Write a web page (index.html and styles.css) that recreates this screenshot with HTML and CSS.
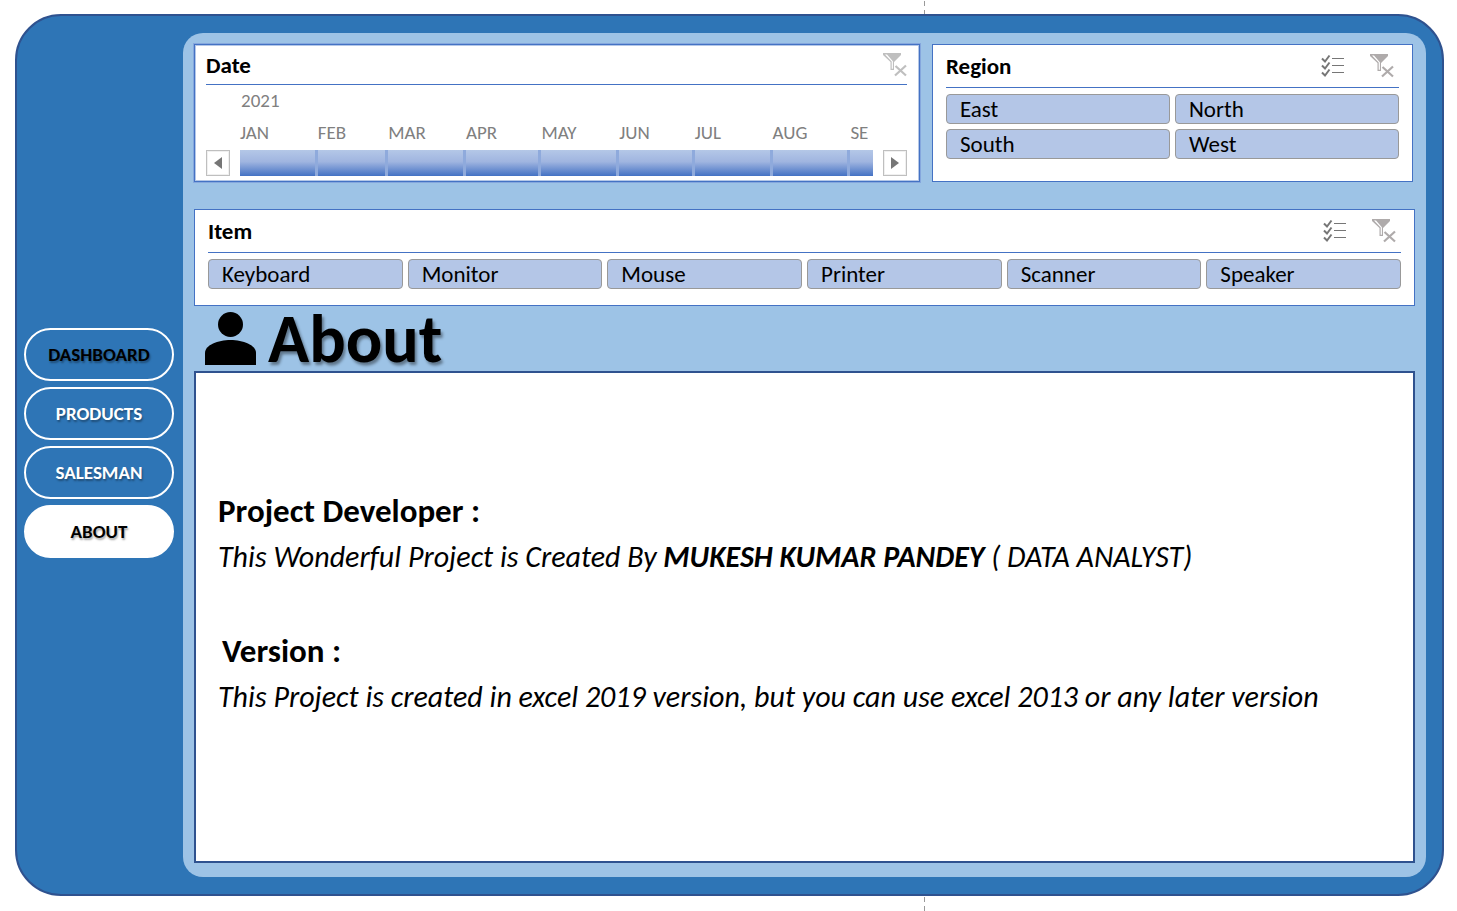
FILE: index.html
```html
<!DOCTYPE html>
<html lang="en">
<head>
<meta charset="utf-8">
<title>About</title>
<link rel="stylesheet" href="styles.css">
</head>
<body>
<svg class="defs" aria-hidden="true">
  <symbol id="clear" viewBox="0 0 24 24">
    <path d="M0 0h18v2l-7 7v8H7.500V9L0 2z" fill="currentColor"/>
    <path d="M2 1.500l6.700 7v7.300h1.200V8.200L4 1.500z" fill="#fff"/>
    <path d="M12.500 13l10.500 9.500M23 12.500L12 22.500" stroke="currentColor" stroke-width="2.200" fill="none"/>
  </symbol>
  <symbol id="multi" viewBox="0 0 24 24">
    <path d="M1 4.500l3 3L8.500 1.500M1 11.500l3 3L8.500 8.500M1 18.500l3 3L8.500 15.500" stroke="currentColor" stroke-width="2" fill="none"/>
    <path d="M11 4.500h12M11 11.500h12M11 18.500h12" stroke="currentColor" fill="none"/>
  </symbol>
</svg>
<div class="break break-top"></div>
<div class="frame">
  <nav class="nav">
    <button class="nav-btn dark">DASHBOARD</button>
    <button class="nav-btn">PRODUCTS</button>
    <button class="nav-btn">SALESMAN</button>
    <button class="nav-btn active">ABOUT</button>
  </nav>
  <main class="panel">
    <div class="filters">
      <section class="card timeline">
        <header class="card-head"><h2>Date</h2>
          <button class="icon-btn" aria-label="Clear date filter"><svg class="icon pale"><use href="#clear"/></svg></button>
        </header>
        <div class="year">2021</div>
        <div class="track">
          <button class="arrow" aria-label="Earlier"><svg viewBox="0 0 8 12"><path d="M8 0v12L0 6z"/></svg></button>
          <div class="months">
            <span>JAN</span><span>FEB</span><span>MAR</span><span>APR</span><span>MAY</span><span>JUN</span><span>JUL</span><span>AUG</span><span>SE</span>
            <button aria-label="January"></button><button aria-label="February"></button><button aria-label="March"></button><button aria-label="April"></button><button aria-label="May"></button><button aria-label="June"></button><button aria-label="July"></button><button aria-label="August"></button><button aria-label="September"></button>
          </div>
          <button class="arrow" aria-label="Later"><svg viewBox="0 0 8 12"><path d="M0 0v12l8-6z"/></svg></button>
        </div>
      </section>
      <section class="card slicer">
        <header class="card-head"><h2>Region</h2>
          <button class="icon-btn" aria-label="Multi-select regions"><svg class="icon dim"><use href="#multi"/></svg></button>
          <button class="icon-btn" aria-label="Clear region filter"><svg class="icon"><use href="#clear"/></svg></button>
        </header>
        <div class="choices two">
          <button>East</button><button>North</button><button>South</button><button>West</button>
        </div>
      </section>
    </div>
    <section class="card slicer items">
      <header class="card-head"><h2>Item</h2>
        <button class="icon-btn" aria-label="Multi-select items"><svg class="icon dim"><use href="#multi"/></svg></button>
        <button class="icon-btn" aria-label="Clear item filter"><svg class="icon"><use href="#clear"/></svg></button>
      </header>
      <div class="choices six">
        <button>Keyboard</button><button>Monitor</button><button>Mouse</button><button>Printer</button><button>Scanner</button><button>Speaker</button>
      </div>
    </section>
    <div class="title">
      <svg class="person" viewBox="0 0 51 53" aria-hidden="true"><circle cx="25.500" cy="12.500" r="12.500"/><path d="M0 53V41C0 33 13 28 25.500 28S51 33 51 41v12z"/></svg>
      <h1>About</h1>
    </div>
    <article class="about">
      <h3>Project Developer :</h3>
      <p>This Wonderful Project is Created By <strong>MUKESH KUMAR PANDEY</strong> ( DATA ANALYST)</p>
      <h3 class="version">Version :</h3>
      <p>This Project is created in excel 2019 version, but you can use excel 2013 or any later version</p>
    </article>
  </main>
</div>
<div class="break break-bottom"></div>
</body>
</html>
```
FILE: styles.css
```css
* { box-sizing: border-box; }

body {
  margin: 0;
  min-height: 100vh;
  display: flex;
  flex-direction: column;
  background: #fff;
  color: #000;
  font-family: Carlito, Lato, "Open Sans", sans-serif;
}

button {
  margin: 0;
  padding: 0;
  border: 0;
  background: none;
  color: inherit;
  font: inherit;
  cursor: pointer;
}

h1, h2, h3, p { margin: 0; }

.defs { display: none; }

.break {
  width: 1px;
  height: 14px;
  margin-left: 924px;
  background: repeating-linear-gradient(#fff 0 1px, #999 1px 6px, #fff 6px 9px);
}

.break-bottom { height: 15px; }

.frame {
  flex: 1;
  display: flex;
  margin: 0 13px 0 15px;
  border: 2px solid #2f528f;
  border-radius: 46px;
  background: #2e75b6;
}

.nav {
  width: 166px;
  padding: 0 9px 24px 7px;
  display: flex;
  flex-direction: column;
  justify-content: center;
  gap: 6px;
}

.nav-btn {
  height: 53px;
  border: 2px solid #fff;
  border-radius: 27px;
  color: #fff;
  font-size: 19px;
  font-weight: 700;
  text-shadow: 1px 2px 2px rgba(0, 0, 0, .35);
}

.nav-btn.dark { color: #000; }

.nav-btn.active { background: #fff; color: #000; }

.panel {
  flex: 1;
  min-width: 0;
  display: flex;
  flex-direction: column;
  margin: 17px 16px 17px 0;
  padding: 11px 11px 14px;
  border-radius: 20px;
  background: #9dc3e6;
}

.filters {
  display: grid;
  grid-template-columns: 726fr 481fr;
  gap: 12px;
  padding-right: 2px;
}

.card {
  padding: 0 13px;
  border: 1px solid #4472c4;
  background: #fff;
}

.timeline {
  padding: 0 12px 5px 11px;
  box-shadow: 0 0 0 1px #85a7dd, inset 0 0 0 1px #b4c7e7;
}

.card-head {
  display: flex;
  align-items: center;
  gap: 25px;
  height: 43px;
  padding-right: 5px;
  border-bottom: 1px solid #4472c4;
}

.timeline .card-head {
  height: 40px;
  padding-right: 0;
}

.card-head h2 {
  flex: 1;
  font-size: 23px;
  line-height: 24px;
}

.icon-btn { height: 24px; }

.icon {
  display: block;
  width: 24px;
  height: 24px;
  color: #afabab;
}

.icon.dim { color: #767676; }

.icon.pale { color: #bfbfbf; }

.year {
  padding: 4px 35px 0;
  color: #808080;
  font-size: 19px;
  line-height: 24px;
}

.track {
  display: flex;
  align-items: flex-end;
  gap: 10px;
}

.arrow {
  display: grid;
  place-items: center;
  width: 24px;
  height: 26px;
  border: 1px solid #bfbfbf;
  box-shadow: inset 0 0 0 1px #f0f0f0;
}

.arrow svg {
  width: 8px;
  height: 12px;
  fill: #767676;
}

.months {
  flex: 1;
  display: grid;
  grid-template-columns: 31fr 28fr 31fr 30fr 31fr 30fr 31fr 31fr 9fr;
  grid-template-rows: 37px 26px;
  color: #808080;
  font-size: 19px;
  line-height: 40px;
}

.months span { min-width: 0; }

.months button {
  border-right: 3px solid #8faadc;
  background: linear-gradient(#b4c7e7, #a0b5e0 45%, #4472c4);
}

.months button:last-child { border-right: 0; }

.choices {
  display: grid;
  gap: 5px;
  padding: 6px 0 16px;
}

.two { grid-template-columns: repeat(2, 1fr); }

.six { grid-template-columns: repeat(6, 1fr); }

.choices button {
  height: 30px;
  padding: 0 13px;
  border: 1px solid #999;
  border-radius: 4px;
  background: #b4c6e7;
  font-size: 23px;
  line-height: 28px;
  text-align: left;
}

.items { margin-top: 27px; }

.title {
  display: flex;
  align-items: center;
  gap: 12px;
  height: 65px;
  padding-left: 11px;
}

.person {
  width: 51px;
  height: 53px;
}

.title h1 {
  font-size: 68px;
  line-height: 64px;
  text-shadow: 2px 3px 3px rgba(0, 0, 0, .4);
}

.about {
  flex: 1;
  padding: 115px 22px 20px;
  border: 2px solid #2f528f;
  background: #fff;
}

.about h3 {
  font-size: 33px;
  line-height: 46px;
}

.about p {
  font-size: 30px;
  font-style: italic;
  line-height: 46px;
}

.about .version {
  margin-top: 48px;
  padding-left: 4px;
}
```
